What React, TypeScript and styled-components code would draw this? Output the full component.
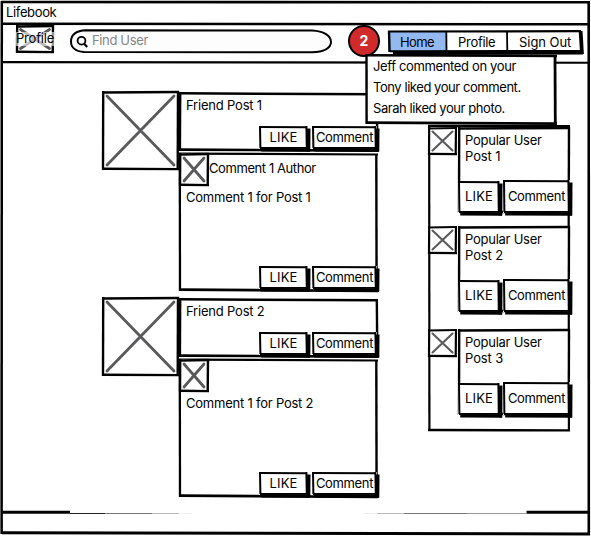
import React from "react";
import styled, { createGlobalStyle } from "styled-components";

const GlobalStyle = createGlobalStyle`
  * { box-sizing: border-box; }
  body { margin: 0; background: #fff; overflow: hidden; }
`;

/* ---------- hand-drawn strokes ---------- */

/** x1, y1, x2, y2, thickness, optional colour */
type Line = [number, number, number, number, number, string?];

const Ink = styled.svg`
  position: absolute;
  left: 0;
  top: 0;
  width: 100%;
  height: 100%;
  overflow: visible;
  pointer-events: none;
`;

const Sketch = ({ lines }: { lines: Line[] }) => (
  <Ink aria-hidden="true">
    {lines.map(([x1, y1, x2, y2, w, c], i) => (
      <line key={i} x1={x1} y1={y1} x2={x2} y2={y2} strokeWidth={w} stroke={c ?? "#000"} />
    ))}
  </Ink>
);

const Cross = ({ w, h, inset, thick }: { w: number; h: number; inset: number; thick: number }) => (
  <Ink aria-hidden="true">
    <path
      d={`M${inset} ${inset}L${w - inset} ${h - inset}M${w - inset} ${inset}L${inset} ${h - inset}`}
      stroke="#5a5a5c"
      strokeWidth={thick}
      strokeLinecap="round"
      fill="none"
    />
  </Ink>
);

/* ---------- text ---------- */

const Label = styled.span<{ $track?: number }>`
  display: block;
  font: 400 13px/16px Inter, "Liberation Sans", sans-serif;
  letter-spacing: ${(p) => p.$track ?? 0}px;
  color: #000;
  white-space: nowrap;
`;

/* ---------- window ---------- */

const Window = styled.div`
  position: relative;
  width: 591px;
  height: 536px;
  display: grid;
  grid-template-rows: 25px 38px 449px 24px;
  background: #fff;
`;

const TitleBar = styled.header`
  padding: 4px 0 0 6px;
`;

const Toolbar = styled.div`
  position: relative;
  z-index: 2;
  display: flex;
  align-items: flex-start;
`;

const ProfileImage = styled.div`
  position: relative;
  width: 38px;
  height: 28px;
  margin-left: 16px;
  padding-top: 5px;
`;

const ProfileCaption = styled.div`
  position: relative;
  height: 16px;
  background: linear-gradient(transparent 2px, rgba(255, 255, 255, 0.6) 2px);
`;

const SearchBox = styled.div`
  position: relative;
  display: flex;
  gap: 3px;
  width: 262px;
  height: 24px;
  margin: 4px 0 0 16px;
  padding: 3px 0 0 6px;
`;

const SearchIcon = styled.svg`
  position: relative;
  width: 13px;
  height: 14px;
  margin-top: 3px;
`;

const Placeholder = styled(Label)`
  position: relative;
  color: #858585;
`;

const Badge = styled.div`
  position: relative;
  z-index: 1;
  display: flex;
  justify-content: center;
  width: 32px;
  height: 32px;
  margin-left: 16px;
  padding-top: 5px;
  border: 2.4px solid #000;
  border-radius: 50%;
  background: #d02a2b;
  color: #fff;
  font: 700 14px/18px Inter, sans-serif;
`;

const Nav = styled.nav`
  position: relative;
  display: grid;
  grid-template-columns: 58px 61px 75px;
  width: 194px;
  height: 24px;
  margin: 5px 0 0 8px;
`;

const NavItem = styled.a<{ $active?: boolean; $left: number }>`
  height: 21px;
  margin-top: 1px;
  padding: 3px 0 0 ${(p) => p.$left}px;
  background: ${(p) => (p.$active ? "#94b9f0" : "#fff")};
`;

const Popover = styled.div`
  position: absolute;
  z-index: 3;
  left: 366px;
  top: 55px;
  width: 190px;
  height: 69px;
  padding: 3px 0 0 7px;
  display: flex;
  flex-direction: column;
  gap: 5px;
  background: #fff;
`;

/* ---------- content ---------- */

const Main = styled.main`
  display: flex;
  align-items: flex-start;
  gap: 50px;
  padding: 28px 0 0 102px;
`;

const Feed = styled.section`
  display: flex;
  flex-direction: column;
`;

const Entry = styled.article`
  display: flex;
  align-items: flex-start;
  height: 206px;
`;

const Picture = styled.div<{ $w: number; $h: number }>`
  position: relative;
  flex: none;
  width: ${(p) => p.$w}px;
  height: ${(p) => p.$h}px;
  background: #fff;
`;

const EntryBody = styled.div`
  display: flex;
  flex-direction: column;
  width: 199px;
`;

const PostBox = styled.div`
  position: relative;
  height: 59px;
  margin-top: 1px;
  padding: 5px 0 0 7px;
`;

const CommentBox = styled.div`
  position: relative;
  height: 138px;
  margin-top: 2px;
`;

const AuthorRow = styled.div`
  display: flex;
  height: 32px;
`;

const Author = styled.div`
  padding: 7px 0 0 0;
`;

const CommentText = styled.div`
  padding: 4px 0 0 7px;
`;

/* Both buttons hang on the bottom-right corner of the box that owns them. */
const Actions = styled.div<{ $bottom: number; $right: number; $gap: number }>`
  position: absolute;
  right: ${(p) => p.$right}px;
  bottom: ${(p) => p.$bottom}px;
  display: flex;
  align-items: flex-end;
  gap: ${(p) => p.$gap}px;
`;

const Button = styled.button<{ $w: number; $h: number; $top: number }>`
  position: relative;
  display: flex;
  justify-content: center;
  align-items: flex-start;
  width: ${(p) => p.$w}px;
  height: ${(p) => p.$h}px;
  padding: ${(p) => p.$top}px 0 0;
  border: 0;
  background: #fff;
`;

const Popular = styled.aside`
  position: relative;
  width: 142px;
  height: 306px;
  margin-top: 34px;
  display: flex;
  flex-direction: column;
`;

const PopularRow = styled.div<{ $h: number }>`
  display: flex;
  align-items: flex-start;
  height: ${(p) => p.$h}px;
  padding-top: 2px;
`;

const PopularCard = styled.div`
  position: relative;
  width: 112px;
  height: 86px;
  margin-left: 1px;
  padding: 5px 0 0 7px;
  background: #fff;
`;

const FooterBar = styled.footer`
  height: 24px;
`;

const box = (w: number, h: number, t = 2.4): Line[] => [
  [0, 1.5, w, 1, t],
  [1.2, 0, 1, h, t],
  [w - 1, 0, w - 1.3, h, t],
  [0, h - 1.2, w, h - 0.9, t],
];

const ActionButton = ({ w, h, top, track, children }: { w: number; h: number; top: number; track: number; children: string }) => (
  <Button $w={w} $h={h} $top={top}>
    <Sketch
      lines={[
        [0, 1, w - 1, 1.2, 2],
        [1, 0, 1.4, h - 1, 2],
        [w - 1.6, 0, w - 1.2, h, 2],
        [w + 0.8, 2.6, w + 0.6, h + 2.6, 3.4],
        [1, h - 1, w, h - 1.2, 1.8],
        [2.2, h + 0.8, w + 2, h + 1, 3.4],
      ]}
    />
    <Label $track={track}>{children}</Label>
  </Button>
);

const FeedActions = () => (
  <Actions $bottom={2} $right={1} $gap={4}>
    <ActionButton w={49} h={23} top={3} track={0.1}>LIKE</ActionButton>
    <ActionButton w={65} h={23} top={3} track={-0.35}>Comment</ActionButton>
  </Actions>
);

const FeedEntry = ({ n, author }: { n: number; author?: string }) => (
  <Entry>
    <Picture $w={77} $h={79}>
      <Cross w={77} h={79} inset={5} thick={2.8} />
      <Sketch lines={box(77, 79)} />
    </Picture>
    <EntryBody>
      <PostBox>
        <Sketch
          lines={[
            [0, 1.3, 199, 2.2, 2.5],
            [1, 0, 0.7, 59, 2.8],
            [197.8, 1, 198.3, 58, 2.4],
            [0, 57.6, 199, 58.6, 2.6],
          ]}
        />
        <Label $track={-0.2}>{`Friend Post ${n}`}</Label>
        <FeedActions />
      </PostBox>
      <CommentBox>
        <Sketch
          lines={[
            [0, 0.6, 199, 1.5, 2.2],
            [0.8, 0, 1, 138, 2.3],
            [197.3, 1, 197.6, 138, 2.4],
            [0, 136.6, 199, 138, 2.6],
          ]}
        />
        <AuthorRow>
          <Picture $w={30} $h={33}>
            <Cross w={30} h={33} inset={5} thick={2.8} />
            <Sketch lines={box(30, 33)} />
          </Picture>
          <Author>{author && <Label $track={-0.42}>{author}</Label>}</Author>
        </AuthorRow>
        <CommentText>
          <Label $track={-0.22}>{`Comment 1 for Post ${n}`}</Label>
        </CommentText>
        <FeedActions />
      </CommentBox>
    </EntryBody>
  </Entry>
);

const PopularPost = ({ n, h }: { n: number; h: number }) => (
  <PopularRow $h={h}>
    <Picture $w={29} $h={28}>
      <Cross w={29} h={28} inset={4.5} thick={2.1} />
      <Sketch lines={box(29, 28, 2.2)} />
    </Picture>
    <PopularCard>
      <Sketch lines={box(112, 86, 2.4)} />
      <Label $track={-0.25}>Popular User</Label>
      <Label $track={-0.1}>{`Post ${n}`}</Label>
      <Actions $bottom={0} $right={0} $gap={3}>
        <ActionButton w={42} h={32} top={7} track={0.1}>LIKE</ActionButton>
        <ActionButton w={67} h={33} top={8} track={-0.35}>Comment</ActionButton>
      </Actions>
    </PopularCard>
  </PopularRow>
);

export default function App() {
  return (
    <>
      <GlobalStyle />
      <Window>
        <Sketch
          lines={[
            [1, 2, 590, 2.3, 2.6],
            [1.8, 1, 1.6, 534, 2.5],
            [588.7, 2, 588.8, 535, 2.6],
            [2, 23.8, 588, 24.3, 2.6],
            [2, 62.1, 588, 62.7, 2.1],
            [2, 532.8, 590, 534, 3],
            [2, 512.3, 70, 512.3, 3],
            [526.5, 512.3, 589, 512.3, 3],
            [70, 513.5, 105, 513.5, 1, "#222"],
            [105, 513.5, 152, 513.5, 1, "#777"],
            [152, 513.5, 179, 513.5, 1, "#bbb"],
            [179, 513.5, 192, 513.5, 1, "#eee"],
            [364, 513.5, 377, 513.5, 1, "#eee"],
            [377, 513.5, 404, 513.5, 1, "#bbb"],
            [404, 513.5, 467, 513.5, 1, "#777"],
            [467, 513.5, 526, 513.5, 1, "#999"],
          ]}
        />
        <TitleBar>
          <Label $track={-0.35}>Lifebook</Label>
        </TitleBar>
        <Toolbar>
          <ProfileImage>
            <Cross w={38} h={28} inset={4.5} thick={2.8} />
            <Sketch lines={box(38, 28)} />
            <ProfileCaption>
              <Label $track={-0.2}>Profile</Label>
            </ProfileCaption>
          </ProfileImage>
          <SearchBox>
            <Ink aria-hidden="true">
              <path
                d="M16 1.3L242 1.5C254 2 261 7 261 13C261 19 254 23 242 23.2L14 23C5 22.5 1 18 1 12.5C1 6 6 1.8 16 1.3Z"
                fill="#fdfdfd"
                stroke="#000"
                strokeWidth="2"
              />
            </Ink>
            <SearchIcon viewBox="0 0 13 14">
              <circle cx="5.5" cy="5.7" r="3.9" fill="none" stroke="#000" strokeWidth="1.8" />
              <path d="M8.2 8.7L11.2 12" stroke="#000" strokeWidth="2.1" />
            </SearchIcon>
            <Placeholder $track={-0.35}>Find User</Placeholder>
          </SearchBox>
          <Badge>2</Badge>
          <Nav>
            <NavItem $active $left={12}>
              <Label $track={-0.6}>Home</Label>
            </NavItem>
            <NavItem $left={12}>
              <Label $track={-0.3}>Profile</Label>
            </NavItem>
            <NavItem $left={12}>
              <Label $track={-0.05}>Sign Out</Label>
            </NavItem>
            <Sketch
              lines={[
                [0, 1.5, 193, 1.2, 2.2],
                [1, 1, 1.6, 22, 2.4],
                [58.3, 1, 58.5, 21, 1.8],
                [119, 1, 119.3, 21, 1.8],
                [192.6, 1, 194, 24, 3.8],
                [2, 21.3, 193, 21, 2],
                [5, 23.2, 195, 22.8, 3.4],
              ]}
            />
          </Nav>
        </Toolbar>
        <Popover>
          <Sketch
            lines={[
              [-1, 0.2, 191, 1, 2.6],
              [0.5, 0, 0.6, 69, 2.4],
              [189, 0, 189.3, 69, 2.8],
              [0, 67.6, 191, 68.6, 2.6],
            ]}
          />
          <Label $track={-0.36}>Jeff commented on your</Label>
          <Label $track={-0.44}>Tony liked your comment.</Label>
          <Label $track={-0.43}>Sarah liked your photo.</Label>
        </Popover>
        <Main>
          <Feed>
            <FeedEntry n={1} author="Comment 1 Author" />
            <FeedEntry n={2} />
          </Feed>
          <Popular>
            <Sketch
              lines={[
                [0, 1, 142, 1.4, 2.6],
                [1.2, 0, 1.4, 306, 2.2],
                [140.6, 2, 140.9, 306, 2.2],
                [0, 305, 142, 305.4, 2.3],
              ]}
            />
            <PopularPost n={1} h={99} />
            <PopularPost n={2} h={103} />
            <PopularPost n={3} h={103} />
          </Popular>
        </Main>
        <FooterBar />
      </Window>
    </>
  );
}
